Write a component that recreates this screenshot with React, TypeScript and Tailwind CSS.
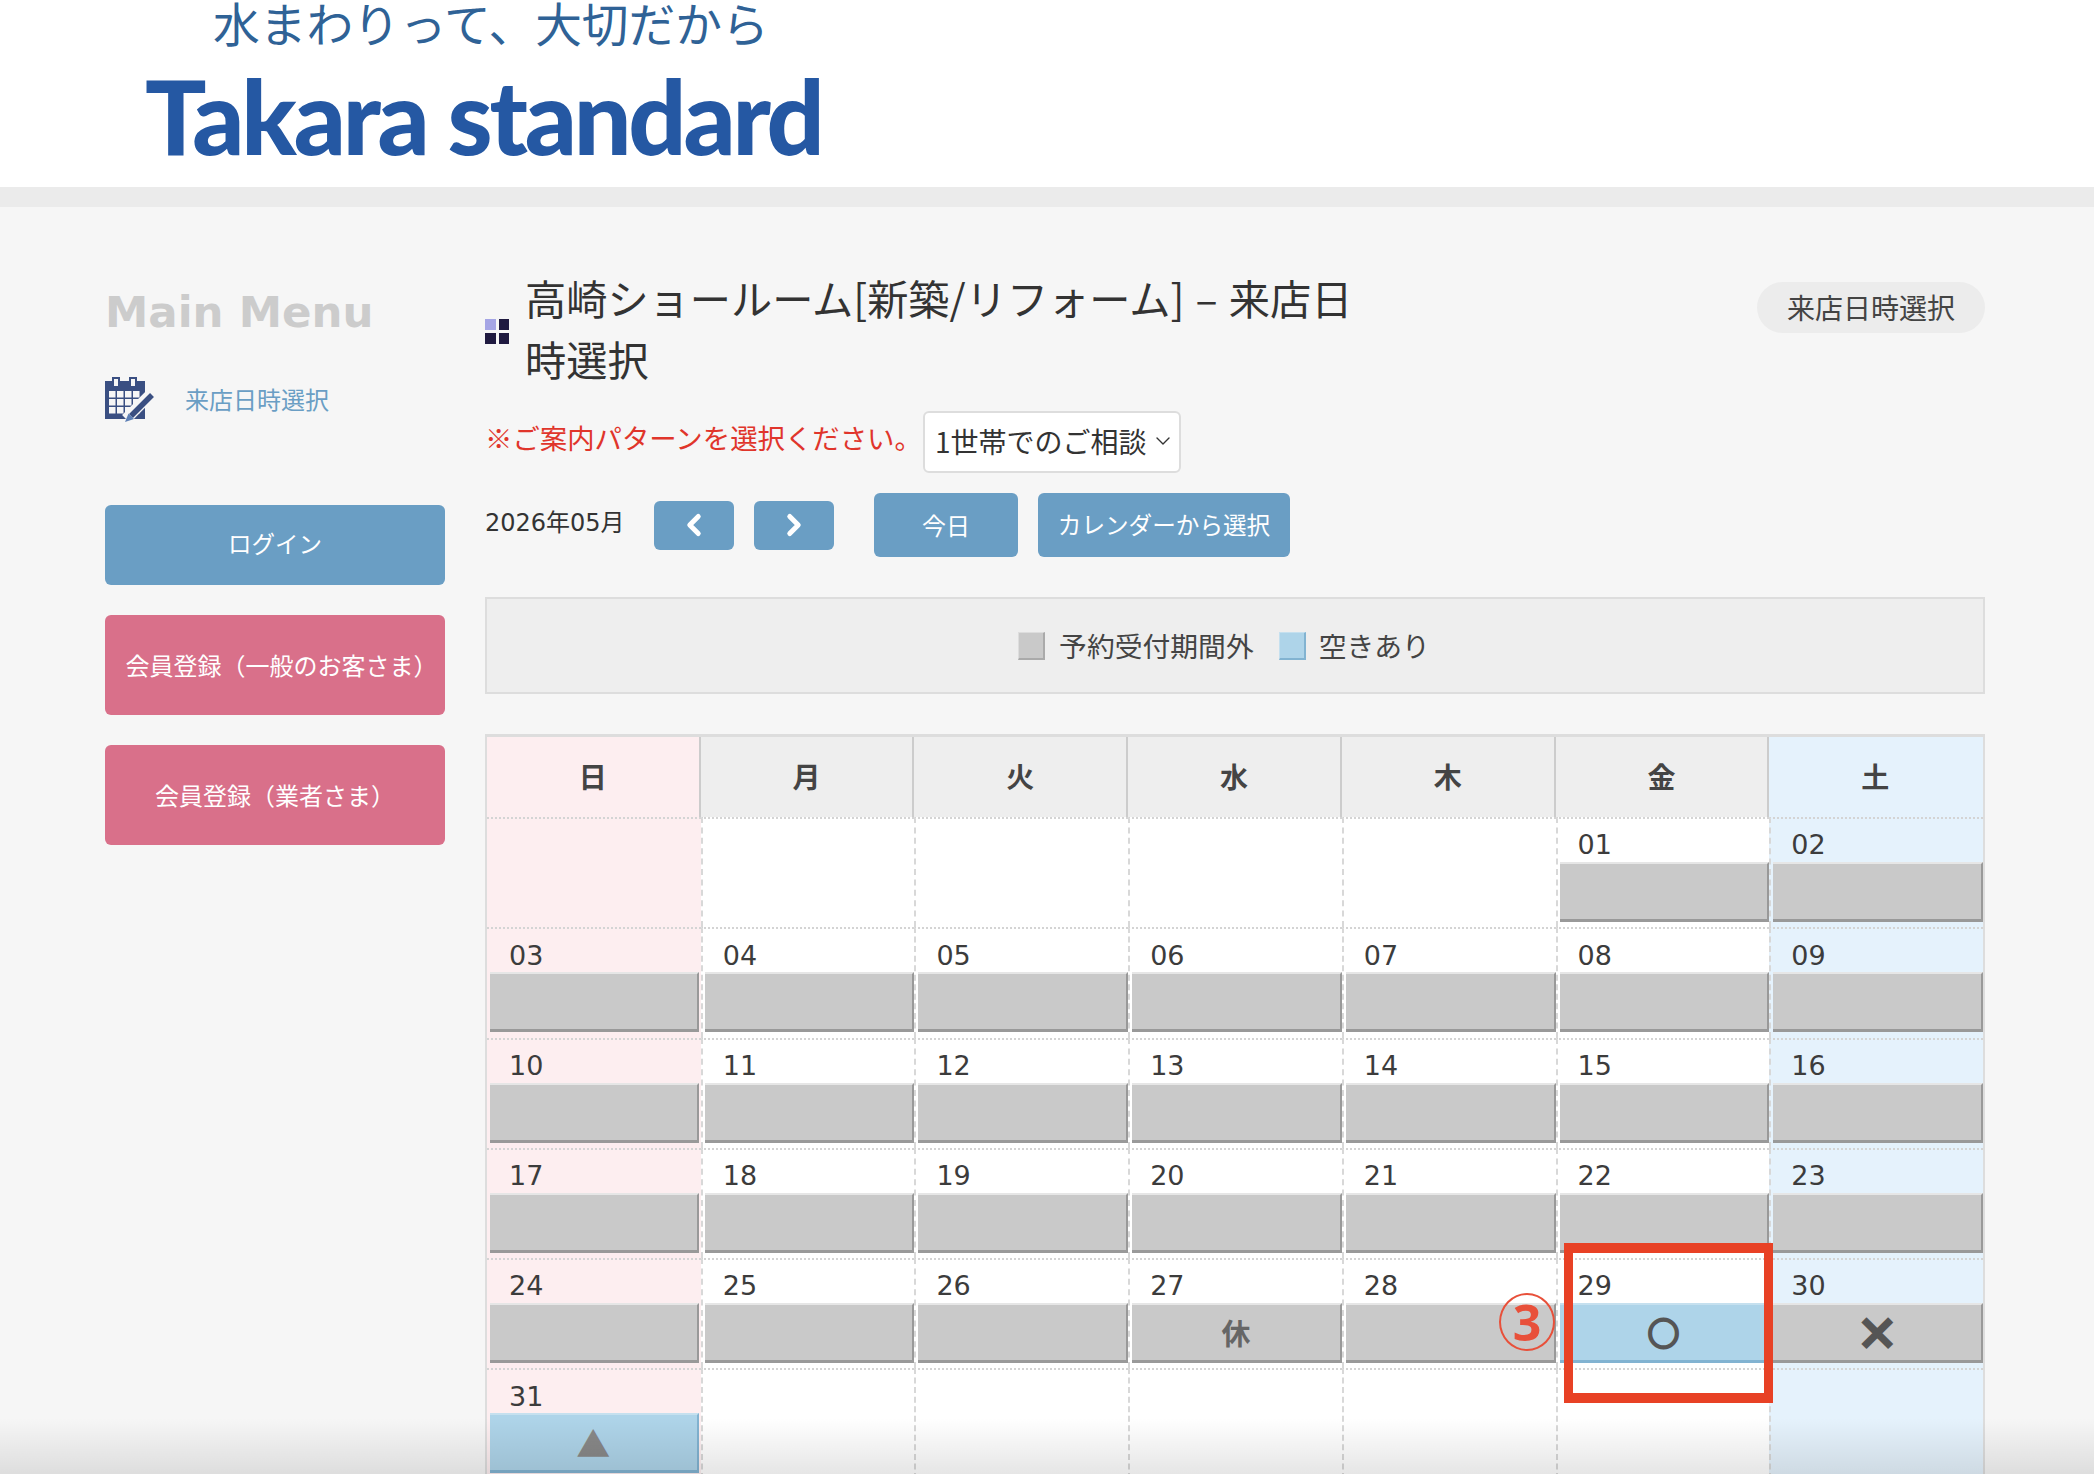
import { ChevronDown, ChevronLeft, ChevronRight } from "lucide-react"

const WEEK = ["日", "月", "火", "水", "木", "金", "土"]

function MenuIcon() {
  return (
    <svg viewBox="0 0 50 46" className="w-[50px] h-[46px] shrink-0">
      <rect x="0" y="4" width="40" height="38" fill="#3a4f82" />
      <rect x="8" y="1" width="6" height="9" fill="#f6f6f6" stroke="#3a4f82" strokeWidth="2" />
      <rect x="25" y="1" width="6" height="9" fill="#f6f6f6" stroke="#3a4f82" strokeWidth="2" />
      {[14, 22, 30].map((y) =>
        [4, 12, 20, 28].map((x) => <rect key={`${x}-${y}`} x={x} y={y} width="6.5" height="6.5" fill="#f6f6f6" />),
      )}
      <path d="M49 14 L21 42" stroke="#f6f6f6" strokeWidth="11" fill="none" />
      <path d="M47 18 L26 39" stroke="#3a4f82" strokeWidth="5.5" fill="none" />
      <path d="M23.5 36.5 L29 42 L20 45 Z" fill="#5d7fb5" />
    </svg>
  )
}

function Status({ day }: { day: number }) {
  const open = day === 29 || day === 31
  return (
    <div
      className={
        open
          ? "h-[60px] flex items-center justify-center border-t-2 border-b-[3px] border-r-2 border-t-[#c5e0ef] border-b-[#82b3d1] border-r-[#82b3d1] bg-[#aed4e9]"
          : "h-[60px] flex items-center justify-center border-t-2 border-b-[3px] border-r-2 border-t-[#e6e6e6] border-b-[#999999] border-r-[#999999] bg-[#c9c9c9]"
      }
    >
      {day === 27 && <span className="text-[29px] font-bold text-[#666666] font-['Noto_Sans_CJK_JP',sans-serif]">休</span>}
      {day === 29 && (
        <span className="mb-[2px] text-[31px] leading-none text-[#555555] [-webkit-text-stroke:3px_#555555] font-['Noto_Sans_CJK_JP',sans-serif]">
          ○
        </span>
      )}
      {day === 30 && (
        <span className="mb-[3px] text-[42px] leading-none font-bold text-[#555555] [-webkit-text-stroke:3px_#555555] font-['Noto_Sans_CJK_JP',sans-serif]">
          ×
        </span>
      )}
      {day === 31 && <span className="text-[34px] leading-none text-[#888888] font-['Noto_Sans_CJK_JP',sans-serif]">▲</span>}
    </div>
  )
}

function Calendar() {
  const cells = Array.from({ length: 42 }, (_, i) => (i >= 5 && i < 36 ? i - 4 : 0))

  return (
    <div className="mt-[40px] border-t-[3px] border-x-2 border-[#dddddd]">
      <div className="grid grid-cols-7 h-[80px]">
        {WEEK.map((w, i) => (
          <div
            key={w}
            className={
              i === 0
                ? "flex items-center justify-center pb-[3px] bg-[#fdeef0] border-r-2 border-[#cccccc] text-[28px] font-bold text-[#444444]"
                : i === 6
                  ? "flex items-center justify-center pb-[3px] pr-[2px] bg-[#e5f2fc] text-[28px] font-bold text-[#444444]"
                  : "flex items-center justify-center pb-[3px] bg-[#eeeeee] border-r-2 border-[#cccccc] text-[28px] font-bold text-[#444444]"
            }
          >
            {w}
          </div>
        ))}
      </div>
      <div className="grid grid-cols-7 auto-rows-[110.3px]">
        {cells.map((day, i) => (
          <div
            key={i}
            className={
              i % 7 === 0
                ? "pl-[3px] pr-[2px] bg-[#fdeef0] border-t-2 border-dotted border-[#d4d4d4]"
                : i % 7 === 6
                  ? "pl-[2px] bg-[#e5f2fc] border-t-2 border-l-2 border-t-[#d4d4d4] border-l-[#d8d8d8] [border-top-style:dotted] [border-left-style:dashed]"
                  : "pl-[2px] bg-white border-t-2 border-l-2 border-t-[#d4d4d4] border-l-[#d8d8d8] [border-top-style:dotted] [border-left-style:dashed]"
            }
          >
            {day > 0 && (
              <>
                <div
                  className={
                    i % 7 === 0
                      ? "h-[43px] flex items-center pt-[10px] pl-[19px] text-[27px] text-[#3c3c3c] font-['DejaVu_Sans',sans-serif]"
                      : "h-[43px] flex items-center pt-[10px] pl-[18px] text-[27px] text-[#3c3c3c] font-['DejaVu_Sans',sans-serif]"
                  }
                >
                  {String(day).padStart(2, "0")}
                </div>
                <Status day={day} />
              </>
            )}
          </div>
        ))}
      </div>
    </div>
  )
}

export default function App() {
  return (
    <div className="relative h-[1474px] overflow-hidden bg-[#f6f6f6] font-['DejaVu_Sans','Noto_Sans_CJK_JP',sans-serif]">
      <header className="h-[187px] bg-white pl-[145px] overflow-hidden">
        <div className="ml-[68px] h-[44px] leading-[44px] text-[46.7px] whitespace-nowrap text-[#2f6296] font-['Noto_Sans_CJK_JP',sans-serif]">
          水まわりって、大切だから
        </div>
        <div className="leading-[144px] text-[102px] font-black whitespace-nowrap tracking-[-3.2px] text-[#2558a3] font-['Lato',sans-serif]">
          Takara standard
        </div>
      </header>
      <div className="h-[20px] bg-[#ebebeb]" />

      <div className="flex pl-[105px] pr-[109px]">
        <aside className="w-[340px] shrink-0">
          <h2 className="mt-[80px] h-[50px] leading-[50px] text-[43.5px] font-bold text-[#cccccc] whitespace-nowrap font-['DejaVu_Sans',sans-serif]">
            Main Menu
          </h2>
          <a className="mt-[40px] flex items-center gap-[30px] text-[24px] text-[#6a9ec4] font-['Noto_Sans_CJK_JP',sans-serif]">
            <MenuIcon />
            <span className="mb-[2px]">来店日時選択</span>
          </a>
          <div className="mt-[82px] h-[80px] flex items-center justify-center pb-[2px] rounded-md bg-[#6a9ec4] text-[23.5px] text-white font-['Noto_Sans_CJK_JP',sans-serif]">
            ログイン
          </div>
          <div className="mt-[30px] h-[100px] flex items-center justify-center pl-[13px] rounded-md bg-[#d9708a] text-[24px] text-white font-['Noto_Sans_CJK_JP',sans-serif]">
            会員登録（一般のお客さま）
          </div>
          <div className="mt-[30px] h-[100px] flex items-center justify-center rounded-md bg-[#d9708a] text-[24px] text-white font-['Noto_Sans_CJK_JP',sans-serif]">
            会員登録（業者さま）
          </div>
        </aside>

        <main className="ml-[40px] w-[1500px] shrink-0 font-['Noto_Sans_CJK_JP',sans-serif]">
          <div className="mt-[60px] flex items-start justify-between">
            <div className="flex items-center gap-[16px]">
              <div className="mt-[6px] grid grid-cols-2 gap-[3px] w-[24px] shrink-0">
                <span className="h-[11px] bg-[#a5a5e5]" />
                <span className="h-[11px] bg-[#1f1a40]" />
                <span className="h-[11px] bg-[#1f1a40]" />
                <span className="h-[11px] bg-[#1f1a40]" />
              </div>
              <h1 className="w-[840px] text-[41.2px] leading-[61px] [word-spacing:2px] text-[#333333]">
                高崎ショールーム[新築/リフォーム] – 来店日時選択
              </h1>
            </div>
            <div className="mt-[15px] w-[228px] h-[51px] flex items-center justify-center pb-[1px] rounded-full bg-[#ececec] text-[28px] text-[#444444]">
              来店日時選択
            </div>
          </div>

          <div className="mt-[22px] flex items-center">
            <span className="mb-[8px] text-[27.4px] text-[#e0352b] whitespace-nowrap">※ご案内パターンを選択ください。</span>
            <div className="ml-[1px] w-[258px] h-[62px] flex items-center justify-between pl-[10px] pr-[4px] pb-[2px] bg-white border-2 border-[#dddddd] rounded-md text-[28px] text-[#333333]">
              <span className="whitespace-nowrap">1世帯でのご相談</span>
              <ChevronDown size={24} strokeWidth={1.4} />
            </div>
          </div>

          <div className="mt-[20px] flex items-center h-[64px]">
            <span className="w-[169px] mb-[4px] text-[24px] text-[#333333] whitespace-nowrap font-['DejaVu_Sans','Noto_Sans_CJK_JP',sans-serif]">
              2026年05月
            </span>
            <button className="w-[80px] h-[49px] flex items-center justify-center rounded-md bg-[#6a9ec4] text-white">
              <ChevronLeft size={34} strokeWidth={3.5} />
            </button>
            <button className="ml-[20px] w-[80px] h-[49px] flex items-center justify-center rounded-md bg-[#6a9ec4] text-white">
              <ChevronRight size={34} strokeWidth={3.5} />
            </button>
            <button className="ml-[40px] w-[144px] h-[64px] rounded-md bg-[#6a9ec4] text-[24px] text-white">今日</button>
            <button className="ml-[20px] w-[252px] h-[64px] rounded-md bg-[#6a9ec4] text-[23.6px] text-white whitespace-nowrap">
              カレンダーから選択
            </button>
          </div>

          <div className="mt-[40px] h-[97px] flex items-center justify-center border-2 border-[#dddddd] bg-[#eeeeee] text-[27.8px] text-[#444444] pr-[22px]">
            <span className="w-[27px] h-[28px] bg-[#c9c9c9] border-l border-t border-r-2 border-b-2 border-l-[#dddddd] border-t-[#dddddd] border-r-[#aaaaaa] border-b-[#aaaaaa]" />
            <span className="ml-[14px]">予約受付期間外</span>
            <span className="ml-[25px] w-[27px] h-[28px] bg-[#aed4e9] border-l border-t border-r-2 border-b-2 border-l-[#c5e0ef] border-t-[#c5e0ef] border-r-[#82b3d1] border-b-[#82b3d1]" />
            <span className="ml-[13px]">空きあり</span>
          </div>

          <Calendar />
        </main>
      </div>

      {/* 手順の注釈 */}
      <div className="absolute left-[1564px] top-[1243px] w-[209px] h-[160px] border-x-[9px] border-y-[10px] border-[#e84125]" />
      <span className="absolute left-[1499px] top-[1293px] w-[56px] h-[58px] flex items-center justify-center rounded-[50%] border-2 border-[#e8503a] text-[50px] leading-none font-bold text-[#e8503a] font-['Open_Sans',sans-serif]">
        3
      </span>
      <div className="absolute inset-x-0 bottom-0 h-[56px] bg-gradient-to-t from-black/10 to-transparent pointer-events-none" />
    </div>
  )
}
